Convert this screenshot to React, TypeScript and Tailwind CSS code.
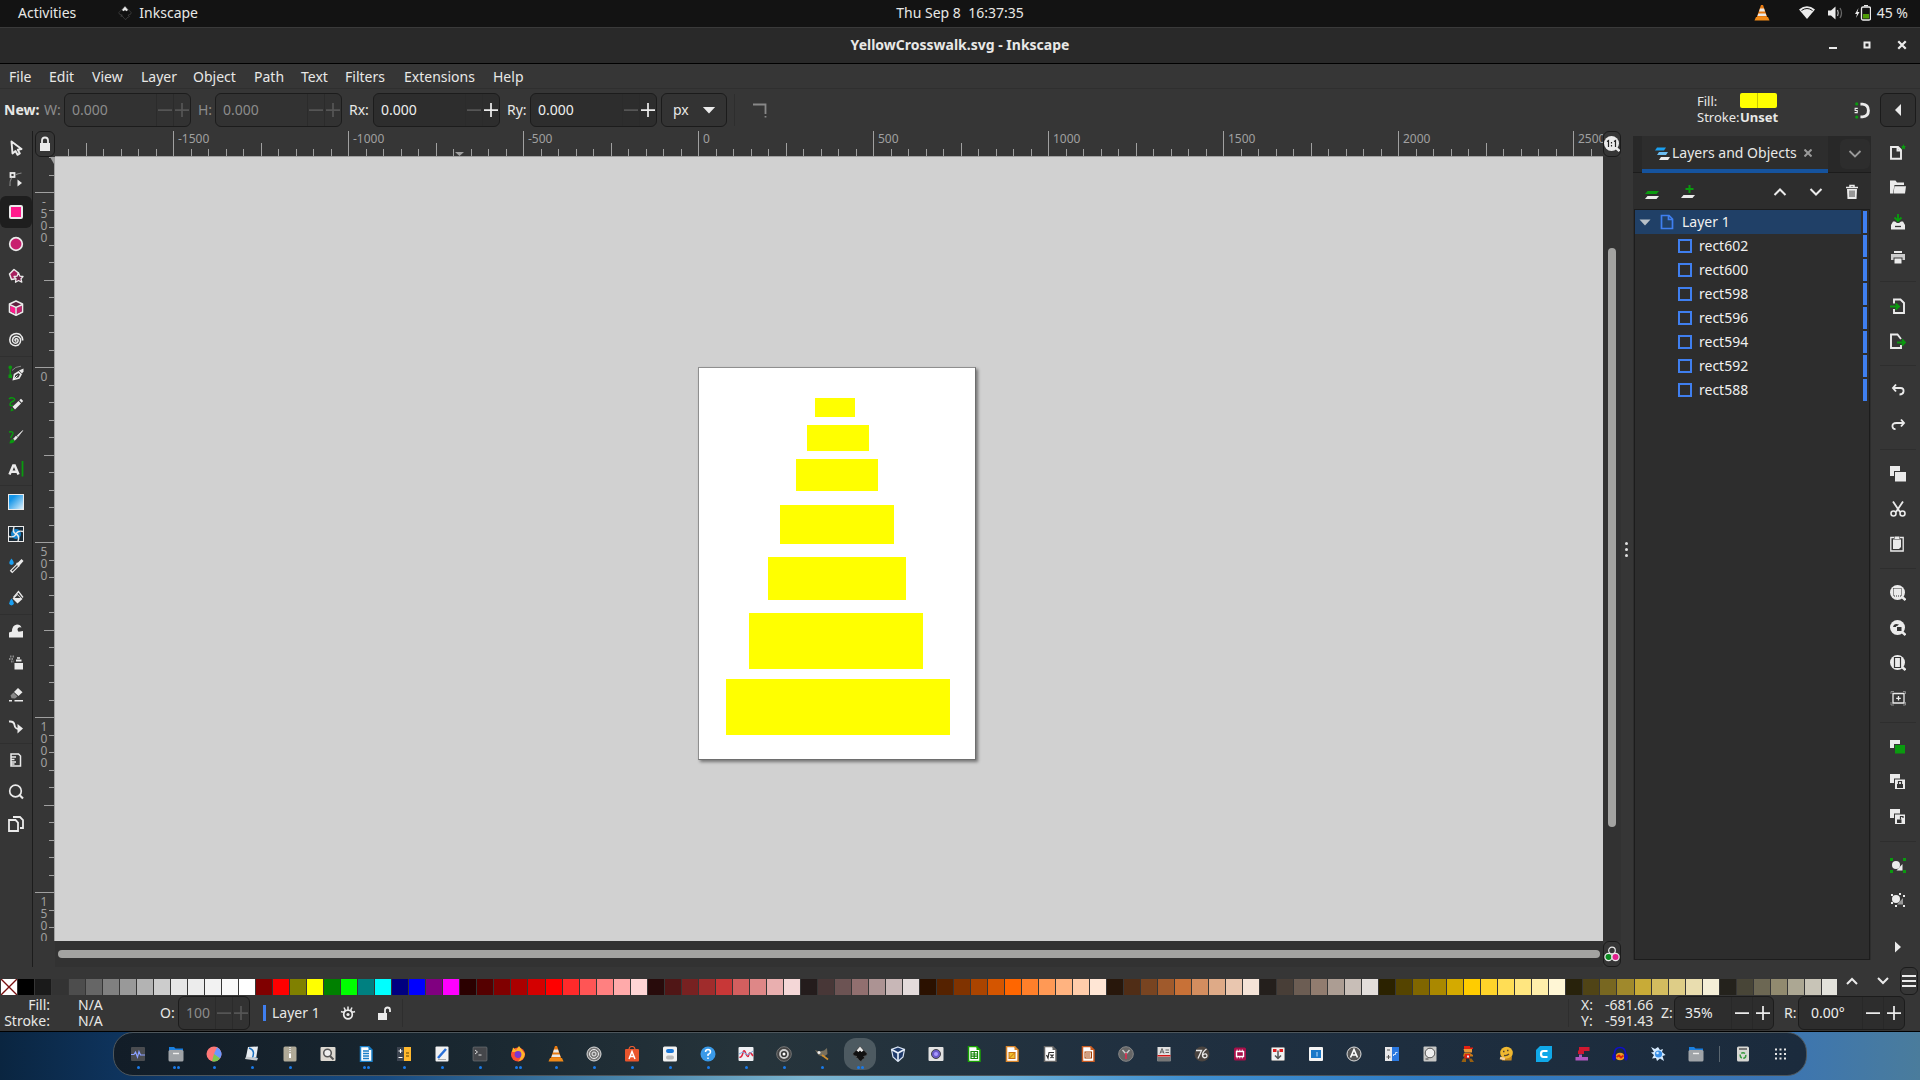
import type { ReactNode } from 'react';

const W = '#ebebeb';
const G = '#0a9a0f';
const B = '#1a9ff0';

function Icon({ children, className = 'size-4' }: { children: ReactNode; className?: string }) {
  return (
    <svg viewBox="0 0 16 16" className={className + ' shrink-0'} fill="none" aria-hidden="true">
      {children}
    </svg>
  );
}

/* ---------- Toolbox ---------- */

const toolGroups: { label: string; icon: ReactNode }[][] = [
  [
    { label: 'Selector', icon: <path d="M3.500 1.500 L13.500 9 L9.800 9.800 L11.800 13.500 L9.500 14.800 L7.500 11 L4.500 13.500 Z" stroke={W} strokeWidth="1.900" strokeLinejoin="round" /> },
    { label: 'Node', icon: <><rect x="2.500" y="1" width="4" height="4" stroke={W} strokeWidth="1.800" /><path d="M7 3 Q10 1.500 13.500 1M3.500 6 Q1.500 9 2 14" stroke="#888" strokeWidth="1.200" /><path d="M9.500 7.500 L14 11 L9.500 14.500Z" fill={W} /></> },
    { label: 'Rectangle', icon: <rect x="2" y="2" width="12" height="12" rx="1" fill="#ff1a8c" stroke={W} strokeWidth="2" /> },
    { label: 'Ellipse', icon: <circle cx="8" cy="8" r="6.300" fill="#c8206f" stroke={W} strokeWidth="1.700" /> },
    { label: 'Star', icon: <><path d="M6 1.500 L10.500 5 L9 10.500 L3.500 11.500 L1.500 6Z" fill="#a8205f" stroke={W} strokeWidth="1.500" strokeLinejoin="round" /><path d="M10.500 5 L12 8.200 L15 8.500 L13 10.800 L13.800 14.200 L10.500 12.500 L7.500 14.200 L8 10.800 L6 8.500 L9 8.200Z" fill="#702048" stroke={W} strokeWidth="1.300" strokeLinejoin="round" /></> },
    { label: '3D Box', icon: <><path d="M8 1 L14.500 4 V12 L8 15.200 L1.500 12 V4Z" fill="#602040" stroke={W} strokeWidth="1.600" strokeLinejoin="round" /><path d="M2.500 5.500 L7.300 8 V13.800 L2.500 11.500Z" fill="#ff1a8c" /><path d="M13.500 5.500 L8.700 8 V13.800 L13.500 11.500Z" fill="#c8206f" /><path d="M1.500 4.500 L8 7.500 L14.500 4.500M8 7.500V15" stroke={W} strokeWidth="1.500" /></> },
    { label: 'Spiral', icon: <path d="M8.500 9 Q7 9.200 7 7.800 Q7.800 6 9.600 7.200 Q10.800 9.200 9 10.800 Q6.200 12 4.800 9.500 Q3.800 6 6.800 4.500 Q10.500 3.300 12.300 6.500 Q13.500 10.500 10.300 13 Q6 15 2.800 11.500 Q0.500 7 3.500 3.300 Q7.500 0 12 2.500 Q15 5 14.700 8.500" stroke={W} strokeWidth="1.500" /> },
  ],
  [
    { label: 'Pen', icon: <><rect x="0.500" y="0.500" width="3.500" height="3.500" rx="1.500" fill={G} /><path d="M2.200 4V11" stroke={G} strokeWidth="1.200" /><rect x="0.500" y="9.500" width="3.500" height="3.500" fill={G} /><path d="M4 5.500 Q7 1.500 13 1.200" stroke="#888" /><path d="M5.500 14.500 L6.500 9.500 L10.500 7 L13 9.500 L11 13 Z" stroke={W} strokeWidth="1.600" /><path d="M11 5.500 L15.500 3.500 V6.500 L14 8.500Z" fill={W} /><path d="M5.500 14.500 L9.500 10.500" stroke={W} /></> },
    { label: 'Pencil', icon: <><path d="M1 2 Q3 0 5.500 1.200 Q8 2.500 5.500 4 Q2 5 2 8 Q3 9.500 5 8" stroke={G} strokeWidth="1.400" /><path d="M2.500 14.500 L3.500 10.500 L6 13.200Z" fill={G} /><path d="M4.500 9.800 L10.500 4 L13 6.500 L7 12.500Z" fill={W} /><path d="M11.300 3.200 L13 1.800 L15.200 4 L13.700 5.700Z" fill={W} /></> },
    { label: 'Calligraphy', icon: <><path d="M1 3 Q5 2 5 4.500 Q3.500 7.500 2.500 9" stroke={G} strokeWidth="1.500" /><path d="M1.500 14.500 Q1.500 11 4.500 10 L6.800 12 Q5.500 14.500 1.500 14.500" fill={G} /><path d="M5.500 10 L8 7 L9.500 8.500 L7 11.300Z M9 6.800 L14.800 1.500 L10 7.800Z" fill={W} stroke={W} strokeWidth=".6" /></> },
    { label: 'Text', icon: <><path d="M1.500 13.500 L5.300 4.500 H6.700 L10.500 13.500M3.300 10.800H8.700" stroke={W} strokeWidth="2.500" /><path d="M14.500 0V15.500" stroke={G} strokeWidth="1.800" /></> },
  ],
  [
    { label: 'Gradient', icon: <><defs><linearGradient id="tg" x1="0" y1="0" x2="1" y2="1"><stop offset=".25" stopColor="#1495e8" /><stop offset="1" stopColor="#e5f4fc" /></linearGradient></defs><rect x=".5" y=".5" width="15" height="15" fill="url(#tg)" stroke={W} /></> },
    { label: 'Mesh', icon: <><rect x=".5" y=".5" width="15" height="15" fill="#1c2c38" stroke={W} /><circle cx="8" cy="8" r="5" fill="#1485d0" /><path d="M8 8 Q4 6 6 1M8 8 Q12 10 10 15M8 8 Q6 12 1 10.500M8 8 Q10 4 15 5.500" stroke={W} strokeWidth="1.400" /></> },
    { label: 'Dropper', icon: <><path d="M3.500 0.500 Q8 6 3.500 7 Q-1 6 3.500 .5" fill={B} /><path d="M3 14 L10 7" stroke={W} strokeWidth="3.500" /><path d="M4 13 L9.500 7.500" stroke="#363636" strokeWidth="1.300" /><path d="M8 5 L10 4.500 L13.500 1 L15.500 3 L12 7 L11 9Z" fill={W} /></> },
    { label: 'Paint bucket', icon: <><path d="M9.500 4 L14.500 9 L9.500 13.500 L4.500 8.500 Z" fill={W} /><path d="M5.500 7.500 L10.500 1.500 L15 7.500" stroke={W} strokeWidth="1.300" /><path d="M9.500 5 L12.500 8H6.500Z" fill="#363636" /><path d="M3.500 8.500 Q8 14.500 3.500 15.500 Q-1 14.500 3.500 8.500" fill={B} /></> },
  ],
  [
    { label: 'Tweak', icon: <path d="M1 14.500 V9.500 L4 8.500 Q4 2 9 1.500 Q12.500 1.500 13.500 4.500 Q9.500 3.500 9.500 7 L10.500 8.800 L15 8 V14.500Z" fill={W} /> },
    { label: 'Spray', icon: <><path d="M6.500 8H15V14.500H6.500Z M8 4.500H13.500V6.500H8Z" fill={W} /><path d="M9 3H12" stroke={W} strokeWidth="1.500" /><path d="M2 1.500H6M1 4H6M3 6.500H6" stroke="#888" strokeWidth="2" strokeDasharray="1.500 1" /></> },
    { label: 'Eraser', icon: <><path d="M10 1 L14.500 5.200 L10.500 9 L6 5Z" fill={W} /><path d="M5.500 5.500 L9.500 9.500 L7 11.500 L3.500 11.200 L2.500 8.500Z" fill="#888" /><path d="M1 13.800H4M6.500 13.800H15" stroke={W} strokeWidth="1.600" /></> },
    { label: 'Connector', icon: <><path d="M1 2.500 Q6 2 6.500 6 Q7 10 11 10" stroke={W} strokeWidth="1.900" /><path d="M9.500 5 L15 9.500 L9.500 14.500Z" fill={W} /></> },
  ],
  [
    { label: 'Measure', icon: <path d="M3 2 H10.500 L12.500 4 V14 H3 Z M3 5H8M3 7.500H6.500M3 10H8M3 12H6.500" stroke={W} strokeWidth="1.500" /> },
    { label: 'Zoom', icon: <><circle cx="7.500" cy="7" r="5.800" stroke={W} strokeWidth="1.700" /><path d="M11 10.500 L15 14.500" stroke={W} strokeWidth="2.200" /></> },
    { label: 'Pages', icon: <path d="M1 4 H7.500 L10 6.500 V15 H1Z M5 1 H12 L15 4 V12 H12" stroke={W} strokeWidth="1.800" /> },
  ],
];

function Toolbox() {
  return (
    <nav aria-label="Toolbox" className="flex w-[33px] shrink-0 flex-col border-r border-[#1c1c1c] pt-px">
      {toolGroups.map((group, i) => (
        <div key={i} className={i ? 'border-t border-[#2f2f2f]' : ''}>
          {group.map((t) => (
            <button
              key={t.label}
              aria-label={t.label}
              className={t.label === 'Rectangle' ? 'flex h-8 w-8 items-center justify-center rounded-md bg-[#1e1e1e]' : 'flex h-8 w-8 items-center justify-center'}
            >
              <Icon>{t.icon}</Icon>
            </button>
          ))}
        </div>
      ))}
    </nav>
  );
}

/* ---------- Command bar ---------- */

const commandGroups: { label: string; icon: ReactNode }[][] = [
  [
    { label: 'New', icon: <><path d="M1 3 H8 L11 6 V14.800 H1Z M7.500 3V6.500H11" stroke={W} strokeWidth="1.900" /><path d="M13.500 0 L14.300 2 L16 2.200 L14.800 3.500 L15.200 5.500 L13.500 4.500 L11.500 5.500 L12.200 3.500 L11 2.200 L12.700 2Z" fill={G} /></> },
    { label: 'Open', icon: <><path d="M0 1.500 H5.500 L7 3.500 H14 V6 H4.500 L3 14.500 H0Z" fill={W} /><path d="M4.500 7.300 H16 L15 14.500 H3.500Z" fill={W} /></> },
    { label: 'Save', icon: <><path d="M8 0V6M4.500 3.500 L8 7 L11.500 3.500" stroke={G} strokeWidth="1.900" /><path d="M3 7.500 H5 L7 9 H9 L11 7.500 H13 L15 11 V15.500 H1 V11Z" fill={W} /><path d="M5 12.500 H11" stroke="#363636" strokeWidth="1.300" /></> },
    { label: 'Print', icon: <><path d="M4 2H12V4H4Z M4.500 9.500H11.500V14.500H4.500Z" fill={W} /><path d="M1 5H15V11H12.500V8.500H3.500V11H1Z" fill="#ccc" /></> },
  ],
  [
    { label: 'Import', icon: <><path d="M4 5.500 V1.500 H10.500 L14 5 V15 H4 V11" stroke={W} strokeWidth="1.900" /><path d="M0 8.500H8M5.500 5.500 L9 8.500 L5.500 11.500" stroke={G} strokeWidth="1.900" /></> },
    { label: 'Export', icon: <><path d="M11 6 L7.500 1.500 H1 V15 H11 V12" stroke={W} strokeWidth="1.900" /><path d="M7 9.500H14M12 6.500 L15 9.500 L12 12.500" stroke={G} strokeWidth="1.900" /></> },
  ],
  [
    { label: 'Undo', icon: <path d="M6 2.500 L3 6 L6 9.500 M3 6 H10.500 Q14 6 13.500 9.500 Q13 12.500 9.500 12.500" stroke={W} strokeWidth="1.900" /> },
    { label: 'Redo', icon: <path d="M11 2.500 L14 6 L11 9.500 M14 6 H6.500 Q2 6 2.500 9.500 Q3 12.500 5.500 12" stroke={W} strokeWidth="1.900" /> },
  ],
  [
    { label: 'Duplicate', icon: <><path d="M0 0H10V5H4V10H0Z" fill={W} /><path d="M5 6H16V15.500H5Z" fill={W} /></> },
    { label: 'Cut', icon: <><path d="M3 0.500 L10 11 M13 .5 L6 11" stroke={W} strokeWidth="1.800" /><circle cx="3.500" cy="12.500" r="2.500" stroke={W} strokeWidth="1.600" /><circle cx="12.500" cy="12.500" r="2.500" stroke={W} strokeWidth="1.600" /></> },
    { label: 'Paste', icon: <><path d="M4 1.500H.8V15H13.200V1.500H10" stroke={W} strokeWidth="1.300" /><path d="M4.500 .5H9.500V3H4.500Z M3 3.500H11V11L9 13H3Z" fill={W} /></> },
  ],
  [
    { label: 'Zoom selection', icon: <><circle cx="7.500" cy="7.500" r="7.500" fill={W} /><path d="M12 12 L15.500 15" stroke={W} strokeWidth="2.500" /><path d="M3.500 3.500H11.500V11H3.500Z" stroke="#333" strokeDasharray="1 1" /></> },
    { label: 'Zoom drawing', icon: <><circle cx="7.500" cy="7.500" r="7.500" fill={W} /><path d="M12 12 L15.500 15" stroke={W} strokeWidth="2.500" /><path d="M3 7 Q4 2.500 9 4.500 L6 7Z" fill="#333" /><path d="M6.500 6.500H12V11.500H6.500Z" fill="#333" stroke={W} /></> },
    { label: 'Zoom page', icon: <><circle cx="7.500" cy="7.500" r="7.500" fill={W} /><path d="M12 12 L15.500 15" stroke={W} strokeWidth="2.500" /><path d="M4.500 2.500H10.500V12.500H4.500Z" stroke="#333" strokeWidth="1.200" /></> },
    { label: 'Center page', icon: <><path d="M3 3.500H14V13H3Z M8.500 6V10.500M6.200 8.300H10.800" stroke={W} strokeWidth="1.300" /><path d="M1 4V1.500H4M13 1.500H15.500V4M15.500 12V15H13M4 15H1V12" stroke="#888" /></> },
  ],
  [
    { label: 'Clone', icon: <><path d="M0 1H10V5H4V9H0Z" fill={W} /><path d="M5 6H15V14.500H5Z" fill={G} /></> },
    { label: 'Lock clone', icon: <><path d="M0 0H10V4.500H4V9H0Z" fill={W} /><path d="M5 5.500H15V15H5Z" fill={W} /><path d="M7 10H13V14H7Z" fill="#333" /><path d="M8.500 10V7.500H11.500V10" stroke="#333" strokeWidth="1.200" /></> },
    { label: 'Unlock clone', icon: <><path d="M0 0H10V4.500H4V9H0Z" fill={W} /><path d="M5 5.500H15V15H5Z" fill={W} /><path d="M7 10.500H11.500V14H7Z" fill="#333" /><path d="M10.500 10.500V7.500H13V9" stroke="#333" strokeWidth="1.200" /></> },
  ],
  [
    { label: 'Group', icon: <><path d="M0 0H3V3H0Z M13 0H16V3H13Z M0 12H3V15H0Z M13 12H16V15H13Z" fill={G} /><circle cx="6" cy="7" r="4" fill={W} /><path d="M12.500 6V12.500H6.500Z" fill={W} /></> },
    { label: 'Ungroup', icon: <><path d="M1 1H3V3H1Z M9 0H11V2H9Z M13 2H15V4H13Z M1 9H3V11H1Z M5 12H7V14H5Z M13 12H15V14H13Z" fill={W} /><circle cx="6" cy="6" r="4" fill={W} /><path d="M13 5V11.500H7Z" fill="#999" /></> },
  ],
];

function CommandBar() {
  return (
    <nav aria-label="Commands" className="flex w-[49px] shrink-0 flex-col pt-[3px] pr-1 pl-[9px]">
      {commandGroups.map((group, i) => (
        <div key={i} className={i ? 'mt-[7px] border-t border-[#2e2e2e] pt-1.5' : ''}>
          {group.map((c) => (
            <button key={c.label} aria-label={c.label} className="flex h-[35px] w-9 items-center justify-center">
              <Icon>{c.icon}</Icon>
            </button>
          ))}
        </div>
      ))}
      <button aria-label="More commands" className="mt-auto mb-1 flex h-8 w-9 items-center justify-center">
        <Icon><path d="M5 2.500 L11 8 L5 13.500Z" fill={W} /></Icon>
      </button>
    </nav>
  );
}

/* ---------- Rulers ---------- */

const UNIT = 0.35;

function steps(from: number, to: number) {
  const out: number[] = [];
  for (let v = from; v <= to; v += 50) out.push(v);
  return out;
}

function tickLength(v: number, major: number, mid: number, minor: number) {
  if (v % 500 === 0) return major;
  return v % 250 === 0 ? mid : minor;
}

function HorizontalRuler() {
  const origin = 643;
  return (
    <svg className="h-full w-full overflow-hidden" aria-label="Horizontal ruler">
      {steps(-1800, 2700).map((v) => {
        const len = tickLength(v, 25, 13, 7);
        return <rect key={v} x={Math.round(origin + v * UNIT)} y={25 - len} width="1" height={len} fill="#a0a0a0" />;
      })}
      {steps(-1500, 2500).filter((v) => v % 500 === 0).map((v) => (
        <text key={v} x={Math.round(origin + v * UNIT) + 5} y="12" fontSize="12" fill="#a0a0a0">{v}</text>
      ))}
      <rect x="0" y="25" width="100%" height="1" fill="#a0a0a0" />
      <path d="M400 21H409L404.500 25Z" fill="#a0a0a0" />
    </svg>
  );
}

function VerticalRuler() {
  const origin = 210;
  return (
    <svg className="h-full w-full overflow-hidden" aria-label="Vertical ruler">
      {steps(-600, 1700).map((v) => {
        const len = tickLength(v, 19, 10, 5);
        return <rect key={v} x={21 - len} y={Math.round(origin + v * UNIT)} width={len} height="1" fill="#a0a0a0" />;
      })}
      {[-500, 0, 500, 1000, 1500].map((v) => (
        <text key={v} y={Math.round(origin + v * UNIT) + 2} fontSize="12" textAnchor="middle" fill="#a0a0a0">
          {String(v).split('').map((ch, i) => <tspan key={i} x="11" dy="12">{ch}</tspan>)}
        </text>
      ))}
      <rect x="21" y="0" width="1" height="100%" fill="#a0a0a0" />
      <path d="M17 0H21V7Z" fill="#a0a0a0" />
    </svg>
  );
}

/* ---------- Canvas ---------- */

const stripes = [
  { id: 'rect602', x: 116, y: 30, w: 40, h: 19 },
  { id: 'rect600', x: 108, y: 57, w: 62, h: 26 },
  { id: 'rect598', x: 97, y: 91, w: 82, h: 32 },
  { id: 'rect596', x: 81, y: 137, w: 114, h: 39 },
  { id: 'rect594', x: 69, y: 189, w: 138, h: 43 },
  { id: 'rect592', x: 50, y: 245, w: 174, h: 56 },
  { id: 'rect588', x: 27, y: 311, w: 224, h: 56 },
];

function Canvas() {
  return (
    <div className="relative overflow-hidden bg-[#d1d1d1]">
      <svg
        className="absolute top-[210px] left-[643px] h-[393px] w-[278px] border border-[#8f8f8f] border-r-[#6e6e6e] border-b-[#6e6e6e] bg-white shadow-[2px_2px_3px_#00000070]"
        viewBox="0 0 276 391"
        aria-label="YellowCrosswalk drawing"
      >
        {stripes.map((s) => (
          <rect key={s.id} x={s.x} y={s.y} width={s.w} height={s.h} fill="#ffff00" />
        ))}
      </svg>
    </div>
  );
}

function Workspace() {
  return (
    <main className="grid min-w-0 flex-1 grid-cols-[22px_minmax(0,1fr)_18px] grid-rows-[26px_minmax(0,1fr)_26px]">
      <button aria-label="Lock guides" className="ml-0.5 flex items-center justify-center rounded-md border border-[#1b1b1b]">
        <Icon><path d="M3 7H13V15H3Z" fill={W} /><path d="M5 7.500V4.500Q5 1.500 8 1.500Q11 1.500 11 4.500V7.500" stroke={W} strokeWidth="1.800" /></Icon>
      </button>
      <HorizontalRuler />
      <button aria-label="Zoom 1:1" className="flex items-center justify-center rounded-md border border-[#1b1b1b]">
        <Icon>
          <circle cx="7.500" cy="7.500" r="7.500" fill={W} /><path d="M12 12 L15.500 15" stroke={W} strokeWidth="2.500" />
          <path d="M3 5.500L4.500 4.500V11M10 5.500L11.500 4.500V11M7.500 6V7.500M7.500 9V10.500" stroke="#222" strokeWidth="1.200" />
        </Icon>
      </button>
      <VerticalRuler />
      <Canvas />
      <div className="flex flex-col items-center bg-[#323232]">
        <div className="h-[91px]" />
        <div className="h-[579px] w-2 rounded-full bg-[#a3a3a1]" />
      </div>
      <div />
      <div className="flex items-start bg-[#323232] px-[3px] pt-[9px]">
        <div className="h-2 w-full rounded-full bg-[#a3a3a1]" />
      </div>
      <button aria-label="Color management" className="flex items-center justify-center rounded-md border border-[#1b1b1b]">
        <Icon>
          <circle cx="8" cy="4.500" r="3.300" stroke={W} strokeWidth="1.200" />
          <circle cx="4.500" cy="11" r="3.600" fill="#0a8a20" stroke={W} strokeWidth="1.200" />
          <circle cx="11.500" cy="11" r="3.600" fill="#e0208c" stroke={W} strokeWidth="1.200" />
        </Icon>
      </button>
    </main>
  );
}

/* ---------- Layers panel ---------- */

function LayerBar() {
  return <span className="mr-0.5 h-[22px] w-1 bg-[#3f7ff0]" />;
}

function LayersPanel() {
  return (
    <aside className="mt-[5px] mb-[7px] flex w-[238px] shrink-0 flex-col bg-[#2d2d2d]">
      <div role="tablist" className="flex h-[37px] items-center border-b border-[#1c1c1c] bg-[#282828] pl-[9px]">
        <div className="flex h-[37px] w-[186px] items-center border-b-4 border-[#15539e] bg-[#2d2d2d] pt-0.5 pl-3">
          <Icon><path d="M3 2.500H12L10 5.500H1Z" fill={B} /><path d="M5 7H14L12 10H3Z" fill="#6bbcf0" /><path d="M7 12H16L14 15H5Z" fill={W} /></Icon>
          <button role="tab" aria-selected="true" className="ml-0.5 text-sm">Layers and Objects</button>
          <button aria-label="Close panel" className="ml-[7px]">
            <Icon className="size-2"><path d="M1 1L15 15M15 1L1 15" stroke="#999" strokeWidth="4" /></Icon>
          </button>
        </div>
        <button aria-label="Panel menu" className="ml-3 flex h-[30px] w-[30px] items-center justify-center rounded-md bg-[#2d2d2d]">
          <Icon><path d="M2.500 5L8 10.500L13.500 5" stroke="#999" strokeWidth="1.800" /></Icon>
        </button>
      </div>
      <div className="flex h-9 items-center pt-px pl-[11px]">
        <button aria-label="Toggle layer" className="w-9"><Icon><path d="M3.500 7H15L12.500 10H1Z" fill={G} /><path d="M3.500 12H15L12.500 15H1Z" fill={W} /></Icon></button>
        <button aria-label="Add layer" className="w-9"><Icon><path d="M9.500 1V9M5.500 5H13.500" stroke={G} strokeWidth="2" /><path d="M3.500 11H15L12.500 14H1Z" fill={W} /></Icon></button>
        <button aria-label="Raise" className="ml-auto w-9"><Icon><path d="M2.500 11L8 5.500L13.500 11" stroke={W} strokeWidth="2" /></Icon></button>
        <button aria-label="Lower" className="w-9"><Icon><path d="M2.500 5L8 10.500L13.500 5" stroke={W} strokeWidth="2" /></Icon></button>
        <button aria-label="Delete" className="w-[27px]"><Icon><path d="M2 3.500H14M6 3V1.500H10V3" stroke={W} strokeWidth="1.500" /><path d="M3 5H13L12.500 15H3.500Z" fill={W} /><path d="M6 6.500V13M8 6.500V13M10 6.500V13" stroke="#444" /></Icon></button>
      </div>
      <ul className="mx-px flex-1 border border-[#1c1c1c] text-sm text-[#f0f0f0]">
        <li className="flex h-6 items-center">
          <button className="flex h-6 flex-1 items-center bg-[#204067] pl-0.5 text-left">
            <Icon><path d="M2.500 5.500H13.500L8 11.500Z" fill="#b8c0c8" /></Icon>
            <Icon className="ml-1.5 size-4"><path d="M2.500 1.500H10L13.500 5V14.500H2.500Z M9.500 2V5.500H13" stroke="#3f7ff0" strokeWidth="1.700" /></Icon>
            <span className="ml-[7px]">Layer 1</span>
          </button>
          <span className="w-0.5" />
          <LayerBar />
        </li>
        {stripes.map((s) => (
          <li key={s.id} className="flex h-6 items-center">
            <button className="flex h-6 flex-1 items-center pl-[43px] text-left">
              <span className="size-3.5 border-2 border-[#3f7ff0]" />
              <span className="ml-[7px]">{s.id}</span>
            </button>
            <LayerBar />
          </li>
        ))}
      </ul>
    </aside>
  );
}

/* ---------- Spin boxes ---------- */

function Spin({ id, value, width, dim, dimMinus, wide, pad = 'pl-[7px]' }: { id: string; value: string; width: string; dim?: boolean; dimMinus?: boolean; wide?: boolean; pad?: string }) {
  const cell = wide ? 'flex w-[21px] items-center justify-center border-l border-[#282828]' : 'flex w-[17px] items-center justify-center border-l border-[#2b2b2b]';
  const off = '#555555';
  return (
    <div className={'flex h-[34px] overflow-hidden rounded-md border border-[#1c1c1c] ' + width + (dim ? ' bg-[#323232] text-[#8c8c8c]' : ' bg-[#2d2d2d] text-[#eeeeee]')}>
      <input id={id} defaultValue={value} className={'w-0 min-w-0 flex-1 bg-transparent outline-none ' + pad} />
      <button aria-label="Decrease" className={cell}><Icon className="size-3.5"><path d="M0 8H16" stroke={dim || dimMinus ? off : W} strokeWidth="2" /></Icon></button>
      <button aria-label="Increase" className={cell}><Icon className="size-3.5"><path d="M0 8H16M8 0V16" stroke={dim ? off : W} strokeWidth="2" /></Icon></button>
    </div>
  );
}

/* ---------- Palette ---------- */

const palette = (
  '000000 1a1a1a 333333 4d4d4d 666666 808080 999999 b3b3b3 cccccc e6e6e6 ececec f2f2f2 f9f9f9 ffffff ' +
  '800000 ff0000 808000 ffff00 008000 00ff00 008080 00ffff 000080 0000ff 800080 ff00ff ' +
  '2b0000 550000 800000 aa0000 d40000 ff0000 ff2a2a ff5555 ff8080 ffaaaa ffd5d5 ' +
  '280b0b 501616 782121 a02c2c c83737 d35f5f de8787 e9afaf f4d7d7 ' +
  '241c1c 483737 6c5353 916f6f ac9393 c8b7b7 e3dbdb ' +
  '2b1100 552200 803300 aa4400 d45500 ff6600 ff7f2a ff9955 ffb380 ffccaa ffe6d5 ' +
  '28170b 502d16 784421 a05a2c c87137 d38d5f deaa87 e9c6af f4e3d7 ' +
  '241f1c 483e37 6c5d53 917c6f ac9d93 c8beb7 e3dedb ' +
  '2b2200 554400 806600 aa8800 d4aa00 ffcc00 ffd42a ffdd55 ffe680 ffeeaa fff6d5 ' +
  '28220b 504416 786721 a0892c c8ab37 d3bc5f decd87 e9ddaf f4eed7 ' +
  '24221c 484537 6c6753 918a6f aca793 c8c4b7 e3e2db'
).split(' ');

function Palette() {
  return (
    <div className="flex h-7 items-end">
      <div className="flex flex-1 gap-px overflow-hidden pl-px">
        <button aria-label="No color" className="h-4 flex-1 bg-white">
          <svg viewBox="0 0 16 16" className="h-4 w-full" preserveAspectRatio="none"><path d="M0 0L16 16M16 0L0 16" stroke="#7a1010" strokeWidth="1.400" /></svg>
        </button>
        {palette.map((c, i) => (
          <button key={i} aria-label={'#' + c} className="h-4 flex-1" style={{ backgroundColor: '#' + c }} />
        ))}
      </div>
      <button aria-label="Scroll palette up" className="flex h-7 w-[30px] items-center justify-center"><Icon><path d="M3 11L8 6L13 11" stroke={W} strokeWidth="2" /></Icon></button>
      <button aria-label="Scroll palette down" className="flex h-7 w-[31px] items-center justify-center"><Icon><path d="M3 5L8 10L13 5" stroke={W} strokeWidth="2" /></Icon></button>
      <button aria-label="Palette menu" className="mr-0.5 ml-0.5 flex h-7 w-[18px] items-center justify-center rounded-md border border-[#1b1b1b]">
        <Icon><path d="M1 3H15M1 8H15M1 13H15" stroke={W} strokeWidth="2" /></Icon>
      </button>
    </div>
  );
}

function StatusBar() {
  return (
    <footer className="flex h-[37px] items-center border-b border-black text-sm leading-4">
      <div className="w-[50px] text-right"><p>Fill:</p><p>Stroke:</p></div>
      <div className="ml-7 w-[82px]"><p>N/A</p><p>N/A</p></div>
      <label htmlFor="opacity" className="w-[18px]">O:</label>
      <Spin id="opacity" value="100" width="w-[72px]" dim />
      <button className="ml-[13px] flex items-center gap-1.5"><span className="h-4 w-[3px] bg-[#3f7ff0]" />Layer 1</button>
      <button aria-label="Toggle visibility" className="ml-5">
        <Icon><circle cx="8" cy="9.500" r="4.300" stroke={W} strokeWidth="1.700" /><circle cx="8" cy="9.500" r="1.600" fill={W} /><path d="M8 1.500V5M4 2.500L5.500 5.500M12 2.500L10.500 5.500M1 6.500Q4.500 8 5 5.500M15 6.500Q11.500 8 11 5.500" stroke={W} strokeWidth="1.500" /></Icon>
      </button>
      <button aria-label="Toggle lock" className="ml-5">
        <Icon><path d="M2 8H11V15H2Z" fill={W} /><path d="M9 8V5Q9 2.500 11.500 2.500Q14 2.500 14 5V7" stroke={W} strokeWidth="1.800" /></Icon>
      </button>
      <span className="ml-2.5 h-7 border-l border-[#2e2e2e]" />
      <span className="ml-auto h-7 border-l border-[#2e2e2e]" />
      <div className="ml-3 w-6"><p>X:</p><p>Y:</p></div>
      <div className="w-12 text-right"><p>-681.66</p><p>-591.43</p></div>
      <label htmlFor="zoom" className="ml-2 w-[13px]">Z:</label>
      <Spin id="zoom" value="35%" width="w-[100px]" wide pad="pl-2.5" />
      <label htmlFor="rotation" className="ml-2.5 w-[14px]">R:</label>
      <Spin id="rotation" value="0.00°" width="mr-[15px] w-[107px]" wide pad="pl-3" />
    </footer>
  );
}

/* ---------- Dock ---------- */

const inkscape = (
  <><path d="M8 0L15 7.500Q16 9.500 11.500 10.500L13 12Q10 13 9 15.500Q7 15 5.500 12L3 11.500L5 10.500Q0 9.500 1 7.500Z" fill="#111" stroke="#666" strokeWidth=".5" /><path d="M8 .5L11.500 4.500L9.500 6L8 4.500L6.500 6L4.500 4.500Z" fill="#e8e8e8" /></>
);
const vlc = (
  <><path d="M7 0H9L13.500 13H2.500Z" fill="#e87a10" /><path d="M6 3.500H10L11 6.500H5ZM4.300 8.500H11.700L12.500 11H3.500Z" fill="#e8e8e8" /><path d="M2 12H14L15.500 15.500H.5Z" fill="#f08a18" /></>
);
const folder = (
  <><path d="M1 1H6L7.500 2.500H15V6H1Z" fill="#1a7fe0" /><rect x=".5" y="4" width="15" height="11.500" rx="1.500" fill="#a0a4a8" /><path d="M5 7.500H11" stroke="#eee" strokeWidth="1.400" /></>
);
const sheet = (fill: string, inner: ReactNode) => (
  <><path d="M2.500 .5H10.500L14 4V15.500H2.500Z" fill="#fff" stroke={fill} strokeWidth="1.500" /><path d="M10.500 0L14.500 4H10.500Z" fill={fill} />{inner}</>
);

const dockItems: { label: string; dots: number; icon: ReactNode }[] = [
  { label: 'System Monitor', dots: 1, icon: <><rect x="1" y="1" width="14" height="14" rx="1" fill="#4a4c50" /><path d="M1 8.500H4L5.500 6L7.500 11L9 5.500L10.500 9H15" stroke="#8aa0ff" strokeWidth="1.200" /></> },
  { label: 'Files', dots: 2, icon: folder },
  { label: 'Disk Usage', dots: 1, icon: <><circle cx="8" cy="8" r="7.500" fill="#ff7878" /><path d="M8 8L11 1.200A7.500 7.500 0 0 1 14 12.500Z" fill="#6a98ff" /><path d="M8 8L14 12.500A7.500 7.500 0 0 1 6 15.200Z" fill="#7cc850" /></> },
  { label: 'Document Viewer', dots: 1, icon: <><path d="M4 1L14 .5L12 13L2 11Z" fill="#e8edf2" /><path d="M5 2Q12 4 8 13L13 12" stroke="#1a70c0" strokeWidth="1.500" /><path d="M1 13L13 14.500L14 12L2 10.500Z" fill="#c8ccd0" /></> },
  { label: 'Archive Manager', dots: 1, icon: <><rect x="1.500" y=".5" width="13" height="15" rx="1.500" fill="#b0aa98" /><path d="M8 1V9" stroke="#eee" strokeWidth="1.500" strokeDasharray="1 1" /><rect x="7" y="8" width="2" height="4" fill="#fff" /></> },
  { label: 'Image Viewer', dots: 0, icon: <><rect x=".5" y="1" width="15" height="14" rx="1" fill="#ddd9d2" /><circle cx="7.500" cy="7" r="3.800" stroke="#555" strokeWidth="1.500" fill="#eee" /><path d="M10 10L13.500 13.500" stroke="#555" strokeWidth="2" /></> },
  { label: 'Writer', dots: 2, icon: sheet('#1a7fc8', <path d="M5 5H11M5 7.500H11M5 10H11M5 12.500H11" stroke="#1a7fc8" strokeWidth="1.400" />) },
  { label: 'Calculator', dots: 1, icon: <><rect x="1" y="1" width="7" height="14" fill="#3c4450" /><rect x="8" y="1" width="7" height="14" fill="#ffb92e" /><path d="M2.500 5H6.500M4.500 3V7M2.500 11.500H6.500" stroke="#fff" /><path d="M10 7H13M10 10H13" stroke="#5c4000" /></> },
  { label: 'Text Editor', dots: 1, icon: <><rect x="1.500" y=".5" width="13" height="15" rx="1" fill="#f2f2f2" /><path d="M4 12L12 3" stroke="#2a70d8" strokeWidth="2.500" /><path d="M4 13.500H12" stroke="#aaa" /></> },
  { label: 'Terminal', dots: 1, icon: <><rect x="1" y="1" width="14" height="14" rx="1" fill="#45474b" stroke="#77797c" strokeWidth=".6" /><path d="M3 4L5.500 6L3 8M6.500 9H9.500" stroke="#ddd" /></> },
  { label: 'Firefox', dots: 2, icon: <><circle cx="8" cy="8.500" r="7" fill="#ff4f30" /><path d="M2 6L3 1.500L6 4L9 0L12 4L15 8Q14 14 8 15.500Q13 10 10 6Z" fill="#ffb52a" /><circle cx="8" cy="8.500" r="3.400" fill="#7a38d0" /></> },
  { label: 'VLC', dots: 1, icon: vlc },
  { label: 'Rings', dots: 1, icon: <><circle cx="8" cy="8" r="7" fill="#777" stroke="#ddd" /><circle cx="8" cy="8" r="4.500" stroke="#eee" /><circle cx="8" cy="8" r="2" stroke="#eee" /></> },
  { label: 'Software', dots: 1, icon: <><path d="M5 4Q5 .5 8 .5Q11 .5 11 4" stroke="#e85a30" strokeWidth="1.200" /><rect x="1" y="3" width="14" height="12.500" rx="1" fill="#e9552c" /><path d="M5 13L8 5.500L11 13M6 10.500H10" stroke="#fff" strokeWidth="1.500" /></> },
  { label: 'Tweaks', dots: 1, icon: <><rect x="1" y=".5" width="14" height="15" rx="1.500" fill="#f2f2f2" /><rect x="4" y="3" width="8" height="4" rx="2" fill="#1a78d8" /><rect x="4" y="9.500" width="8" height="4" rx="2" fill="#bbb" /></> },
  { label: 'Help', dots: 1, icon: <><circle cx="8" cy="8" r="7.500" fill="#3a9ae8" /><path d="M5.500 6Q5.500 3.500 8 3.500Q10.500 3.500 10.500 6Q10.500 7.500 8 8.500V10M8 11.500V13" stroke="#fff" strokeWidth="1.500" /></> },
  { label: 'Plot', dots: 1, icon: <><rect x=".5" y="1" width="15" height="14" rx="1" fill="#eef0f4" /><path d="M1.500 11Q3.500 12 5 7Q6 2 8 8Q10 13 11 8Q12 5 15 10" stroke="#e02840" strokeWidth="1.500" /><path d="M1 8L5 6L10 9L15 5" stroke="#7aa8e0" /></> },
  { label: 'Rhythmbox', dots: 1, icon: <><circle cx="8" cy="8" r="7.300" fill="#444" stroke="#777" /><circle cx="8" cy="8" r="4" fill="#333" stroke="#ccc" strokeWidth="1.800" /><circle cx="8" cy="8" r="1.500" fill="#fff" /></> },
  { label: 'GIMP', dots: 1, icon: <><path d="M1 4L5 5.500L10 4.500L13 2L13.500 8L9.500 11L4.500 9Z" fill="#77705f" /><circle cx="5" cy="6.500" r="1.500" fill="#eee" /><path d="M8 9L14 13.500" stroke="#d09030" strokeWidth="1.600" /></> },
  { label: 'Inkscape', dots: 2, icon: inkscape },
  { label: 'VirtualBox', dots: 0, icon: <><path d="M8 1L14.500 3.500L13 11L8 15.500L3 11L1.500 3.500Z" fill="#203c6c" stroke="#d8e4f4" strokeWidth="1.200" /><path d="M1.500 3.500L8 7L14.500 3.500M8 7V15" stroke="#e8f0fa" strokeWidth="1.600" /></> },
  { label: 'Screenshot', dots: 0, icon: <><rect x=".5" y="1" width="15" height="14" rx="1" fill="#e2e2e2" /><circle cx="8" cy="8" r="4.500" fill="#6a5ac8" stroke="#444" /><circle cx="8" cy="8" r="2" fill="#a898ff" /></> },
  { label: 'Calc', dots: 0, icon: sheet('#18a303', <path d="M5 5.500H11.500V12.500H5ZM5 8H11.500M5 10.200H11.500M8.200 5.500V12.500" stroke="#18850a" strokeWidth="1.200" />) },
  { label: 'Draw', dots: 0, icon: sheet('#d8852a', <><rect x="5" y="6.500" width="6" height="6" fill="#f0c030" stroke="#c87010" /><path d="M5 12.500L11 6.500" stroke="#c87010" /></>) },
  { label: 'Math', dots: 0, icon: sheet('#666', <path d="M4.500 9L6 12L7 6.500H12M8.500 8.500L11.500 12M11.500 8.500L8.500 12" stroke="#333" strokeWidth="1.200" />) },
  { label: 'Impress', dots: 0, icon: sheet('#c85a20', <><rect x="5" y="6" width="6.500" height="6" stroke="#a33e03" /><path d="M6 8H10.500M6 10H10.500" stroke="#a33e03" /></>) },
  { label: 'Y PPA', dots: 0, icon: <><circle cx="8" cy="8" r="7.300" fill="#666" stroke="#888" /><path d="M4.500 4L8 8L11.500 4" stroke="#ccc" strokeWidth="1.400" /><path d="M8 7V13" stroke="#d83050" strokeWidth="1.700" /></> },
  { label: 'Fonts', dots: 0, icon: <><rect x="1.500" y="1" width="13" height="14" fill="#e0e0e0" /><path d="M4 7.500L6 2.500L8 7.500M4.700 6H7.300M9.500 4H13M9.500 6.500H13" stroke="#555" strokeWidth=".9" /><rect x="1.500" y="9" width="13" height="1.500" fill="#d01818" /><rect x="1.500" y="11" width="13" height="4.500" fill="#777" /></> },
  { label: 'System76', dots: 0, icon: <><circle cx="8" cy="8" r="7.500" fill="#4a4440" /><path d="M2 4.500H7.500L4 12.500M12.500 3Q8 6 8.500 10Q9.500 12.500 12 11.500Q14 9.500 12 8Q10 7.500 8.700 9.500" stroke="#e8e8e8" strokeWidth="1.300" /></> },
  { label: 'Firmware', dots: 0, icon: <><rect x="2" y="1.500" width="12" height="13" rx="1.500" fill="#a8104a" /><rect x="4.500" y="5.500" width="7" height="5" stroke="#fff" strokeWidth="1.400" /><path d="M4.500 4.200H11.500M4.500 11.800H11.500" stroke="#fff" strokeDasharray="1.300 1.300" /></> },
  { label: 'Screen Layout', dots: 0, icon: <><rect x="1.500" y="1.500" width="13" height="13" rx="1" fill="#f2f2f2" stroke="#999" /><path d="M3 3H6.500V6H3ZM9.500 3H13V6H9.500Z" fill="#e02020" /><path d="M8 4.500V13M5 9.500L8 12.500L11 9.500" stroke="#555" strokeWidth="1.500" /></> },
  { label: 'Desktop', dots: 0, icon: <><rect x="1" y="1" width="14" height="14" rx="1" fill="#f4f4f4" /><rect x="3" y="4" width="10" height="8" fill="#1a78c8" /><path d="M9 6V10.500" stroke="#bfe0ff" /></> },
  { label: 'Updater', dots: 0, icon: <><circle cx="8" cy="8" r="7" fill="#555" stroke="#ddd" /><path d="M4.500 11.500L8 3.500L11.500 11.500M5.500 9H10.500" stroke="#fff" strokeWidth="1.600" /></> },
  { label: 'Qalculate', dots: 0, icon: <><rect x="1" y="1" width="7" height="14" fill="#e8e8ea" /><rect x="8" y="1" width="7" height="14" fill="#2a78e0" /><path d="M3 4H6M2.500 11H6.500M4.500 9V13" stroke="#555" /><path d="M9.500 10V8.500H11.500V6.500H13.500" stroke="#cfe4ff" /></> },
  { label: 'Disks', dots: 0, icon: <><rect x="1.500" y=".5" width="13" height="15" rx="1" fill="#c8c8c6" /><circle cx="8" cy="7" r="4.800" fill="#eee" stroke="#555" /><path d="M3.500 13H6.500" stroke="#444" /></> },
  { label: 'Mario', dots: 0, icon: <><path d="M4 0H10V1.500H13V3H4Z" fill="#e02010" /><path d="M3.500 3H12V6.500H4.500Z" fill="#e89838" /><path d="M4 7H10L13 9V10.500H3Z" fill="#c87818" /><path d="M5 8H10V12.500H4Z" fill="#e02010" /><path d="M7 9.500H9V11.500H7Z" fill="#dfe8ff" /><path d="M3 12.500H6V16H1.500ZM9 12.500H11.500L14 16H10Z" fill="#986010" /></> },
  { label: 'Pingus', dots: 0, icon: <><circle cx="8.500" cy="7" r="6.300" fill="#f0b830" /><path d="M3.500 11Q8 15 14 10L13.500 14.500H4Z" fill="#c8881c" /><path d="M5 5.500H6.500M9 4.500H10.500M6 9.500Q9 10 11 8" stroke="#543" strokeWidth="1.300" /><path d="M2 12L7 13" stroke="#f4d0a0" strokeWidth="2.500" /></> },
  { label: 'Cura', dots: 0, icon: <><path d="M4 0H16V12L12 16H0V4Z" fill="#10a8e8" /><path d="M11.500 5H7.500Q5 5 5 8Q5 11 7.500 11H11.500" stroke="#fff" strokeWidth="2.200" /></> },
  { label: 'Blocks', dots: 0, icon: <><path d="M5 1H15.500V5H10V8H4V4.500H5Z" fill="#d01830" /><path d="M1.500 14.500V11H5V8.500H8V11H14V14.500Z" fill="#b058c0" /></> },
  { label: 'Audacity', dots: 0, icon: <><path d="M2.500 12V8Q2.500 1.500 8 1.500Q13.500 1.500 13.500 8V12" stroke="#1010c8" strokeWidth="1.600" /><ellipse cx="8" cy="10.500" rx="4.300" ry="3.800" fill="#f0a020" /><path d="M4.500 11L7 9.500L9 11.500L11.500 9.500" stroke="#d82010" strokeWidth="1.800" /><ellipse cx="2" cy="11" rx="1.800" ry="3.500" fill="#1010b8" /><ellipse cx="14" cy="11" rx="1.800" ry="3.500" fill="#1010b8" /></> },
  { label: 'Xscorch', dots: 0, icon: <><path d="M1 1L5 3L8 1L10 4L13 3L12 6L15.500 9L12.500 10L14 15L10 12.500L7 15L6 12L2 12.500L4 9L1 6.500L4 6Z" fill="#d8ecff" /><circle cx="8.500" cy="8" r="3.600" fill="#3a90e8" /><circle cx="7.500" cy="7" r="1.300" fill="#cfe8ff" /></> },
  { label: 'Home', dots: 0, icon: folder },
];

function Dock() {
  return (
    <div className="flex h-12 items-start justify-center bg-[linear-gradient(90deg,#0a2540_0%,#103a6a_9%,#174a80_20%,#4a86ab_33%,#7ab4cf_42%,#6aaed6_52%,#3f8fd0_62%,#2f7cc4_74%,#3a74b4_92%,#4a7c9c_100%)]">
      <div className="flex h-11 items-center rounded-[20px] border border-[#4d565c] bg-[linear-gradient(90deg,#121d28_0%,#1a2831_22%,#26343b_38%,#203040_60%,#1b2b3d_100%)] pr-[6px] pl-[5px]">
        {dockItems.map((d) => (
          <button key={d.label} aria-label={d.label} className="flex h-11 w-[38px] flex-col items-center">
            <span className={d.label === 'Inkscape' ? 'mt-1.5 flex h-8 w-8 flex-col items-center rounded-xl bg-[#4d5a61] pt-2' : 'mt-1.5 flex h-8 w-8 flex-col items-center pt-2'}>
              <Icon>{d.icon}</Icon>
              <span className="mt-1 flex gap-px">
                {Array.from({ length: d.dots }, (_, i) => <i key={i} className="size-[3px] rounded-full bg-[#1a7ae8]" />)}
              </span>
            </span>
          </button>
        ))}
        <span className="mr-1 ml-1 h-4 border-l border-[#5a6670]" />
        <button aria-label="Trash" className="flex h-11 w-[38px] justify-center pt-3.5">
          <Icon><rect x="2" y=".5" width="12" height="15" rx="1.500" fill="#d8d8d4" /><path d="M4 3H12" stroke="#555" strokeWidth="1.500" /><circle cx="8" cy="9.500" r="2.800" stroke="#3a9a40" strokeWidth="1.500" strokeDasharray="4 1.500" /></Icon>
        </button>
        <button aria-label="Show applications" className="flex h-11 w-[38px] justify-center pt-3.5">
          <Icon><path d="M2 3.500H14M2 8H14M2 12.500H14" stroke="#e8e8e8" strokeWidth="2" strokeDasharray="2 2.500" /></Icon>
        </button>
      </div>
    </div>
  );
}

/* ---------- Application ---------- */

const menus: [string, string][] = [
  ['File', 'w-10'],
  ['Edit', 'w-[43px]'],
  ['View', 'w-[49px]'],
  ['Layer', 'w-[52px]'],
  ['Object', 'w-[61px]'],
  ['Path', 'w-[47px]'],
  ['Text', 'w-11'],
  ['Filters', 'w-[59px]'],
  ['Extensions', 'w-[89px]'],
  ['Help', 'w-[46px]'],
];

export default function App() {
  return (
    <div className="flex h-screen flex-col overflow-hidden bg-[#363636] font-['Noto_Sans',sans-serif] text-sm text-[#e8e8e6]">
      <header className="grid h-[27px] grid-cols-[1fr_auto_1fr] items-center bg-[#131313] px-3 pb-0.5">
        <div className="flex items-center pl-1.5">
          <button>Activities</button>
          <button className="ml-[42px] flex items-center gap-[7px]"><Icon className="size-3.5">{inkscape}</Icon>Inkscape</button>
        </div>
        <time className="whitespace-pre">Thu Sep 8  16:37:35</time>
        <div className="flex items-center justify-end">
          <Icon>{vlc}</Icon>
          <Icon className="ml-[29px] size-4"><path d="M0 4.500Q8 -2 16 4.500L8 14Z" fill={W} /><path d="M2.500 5.500Q8 1.500 13.500 5.500" stroke="#131313" /></Icon>
          <Icon className="ml-3 size-4"><path d="M1 5.500H4L8.500 1.500V14.500L4 10.500H1Z" fill={W} /><path d="M10.500 5Q12 8 10.500 11" stroke="#aaa" strokeWidth="1.300" /><path d="M13 3Q16 8 13 13" stroke="#666" strokeWidth="1.300" /></Icon>
          <Icon className="ml-3 size-4"><path d="M3.500 3L0 9H2L1 13L4.500 7H2.500Z" fill={W} /><rect x="6.500" y="2" width="9" height="13" rx="1.500" stroke={W} strokeWidth="1.300" /><path d="M9 .5H13" stroke={W} strokeWidth="1.500" /><rect x="8" y="9" width="6" height="4.500" fill="#4e9a06" /></Icon>
          <span className="ml-1.5">45 %</span>
        </div>
      </header>

      <div className="grid h-[37px] grid-cols-[1fr_auto_1fr] items-center border-t border-b border-t-[#3a3a3a] border-b-black bg-[#292929] px-[13px] pb-0.5">
        <h1 className="col-start-2 font-bold">YellowCrosswalk.svg - Inkscape</h1>
        <div className="flex items-center justify-end gap-[26px]">
          <button aria-label="Minimize"><Icon className="size-2"><path d="M0 14H16" stroke={W} strokeWidth="4" /></Icon></button>
          <button aria-label="Maximize"><Icon className="size-2"><path d="M3 3H13V13H3Z" stroke={W} strokeWidth="4" /></Icon></button>
          <button aria-label="Close"><Icon className="size-2.5"><path d="M2 2L14 14M14 2L2 14" stroke={W} strokeWidth="3.500" /></Icon></button>
        </div>
      </div>

      <nav aria-label="Menu" className="flex h-[25px] items-center border-b border-[#2f2f2f] pt-px pl-px">
        {menus.map(([name, width]) => (
          <button key={name} className={'pl-2 text-left ' + width}>{name}</button>
        ))}
      </nav>

      <div className="flex h-[42px] items-center pl-1">
        <strong className="w-10">New:</strong>
        <label htmlFor="w" className="w-5 text-[#8c8c8c]">W:</label>
        <Spin id="w" value="0.000" width="w-[127px]" dim />
        <label htmlFor="h" className="ml-[7px] w-[17px] text-[#8c8c8c]">H:</label>
        <Spin id="h" value="0.000" width="w-[127px]" dim />
        <label htmlFor="rx" className="ml-[7px] w-6">Rx:</label>
        <Spin id="rx" value="0.000" width="w-[127px]" dimMinus />
        <label htmlFor="ry" className="ml-[7px] w-[23px]">Ry:</label>
        <Spin id="ry" value="0.000" width="w-[127px]" dimMinus />
        <div className="relative ml-1">
          <select aria-label="Unit" className="h-[34px] w-[66px] appearance-none rounded-md border border-[#1b1b1b] bg-[#333333] pl-[11px]">
            <option>px</option>
          </select>
          <Icon className="pointer-events-none absolute top-2.5 right-[11px] size-3.5"><path d="M1 4.500H15L8 12Z" fill={W} /></Icon>
        </div>
        <span className="ml-[7px] h-8 border-l border-[#2e2e2e]" />
        <button aria-label="Make corners sharp" className="ml-4"><Icon><path d="M2 2.500H14.500V12M14.500 14V15.500" stroke="#888" strokeWidth="1.800" /></Icon></button>
        <div className="ml-auto grid w-[156px] grid-cols-[43px_1fr] items-center pb-[3px] text-[13px] leading-4">
          <span>Fill:</span>
          <span className="flex h-[15px] w-[37px] rounded-[2px] bg-[#ffff00]"><i className="w-[18px] border-r border-[#c8c800]" /></span>
          <span>Stroke:</span>
          <strong>Unset</strong>
        </div>
        <button aria-label="Snapping" className="mr-2.5">
          <Icon className="size-[17px]"><path d="M7 2H9Q14.500 2.500 14.500 8Q14.500 13.500 9 14H7" stroke={W} strokeWidth="2.700" /><circle cx="3.500" cy="1.800" r="1.500" fill={G} /><circle cx="3.500" cy="14.200" r="1.500" fill={G} /><path d="M4.500 6H2V8H4V10H1.500" stroke={W} /></Icon>
        </button>
        <button aria-label="Snap options" className="mr-1 flex h-[34px] w-9 items-center justify-center rounded-md border border-[#1b1b1b] bg-[#303030]">
          <Icon><path d="M11 2L5 8L11 14Z" fill={W} /></Icon>
        </button>
      </div>

      <div className="flex min-h-0 flex-1">
        <Toolbox />
        <Workspace />
        <div className="flex w-3 shrink-0 flex-col items-center justify-center gap-[3px] pr-px">
          <i className="size-[3px] rounded-full bg-[#e0e0e0]" />
          <i className="size-[3px] rounded-full bg-[#e0e0e0]" />
          <i className="size-[3px] rounded-full bg-[#e0e0e0]" />
        </div>
        <LayersPanel />
        <CommandBar />
      </div>
      <Palette />
      <StatusBar />
      <Dock />
    </div>
  );
}
